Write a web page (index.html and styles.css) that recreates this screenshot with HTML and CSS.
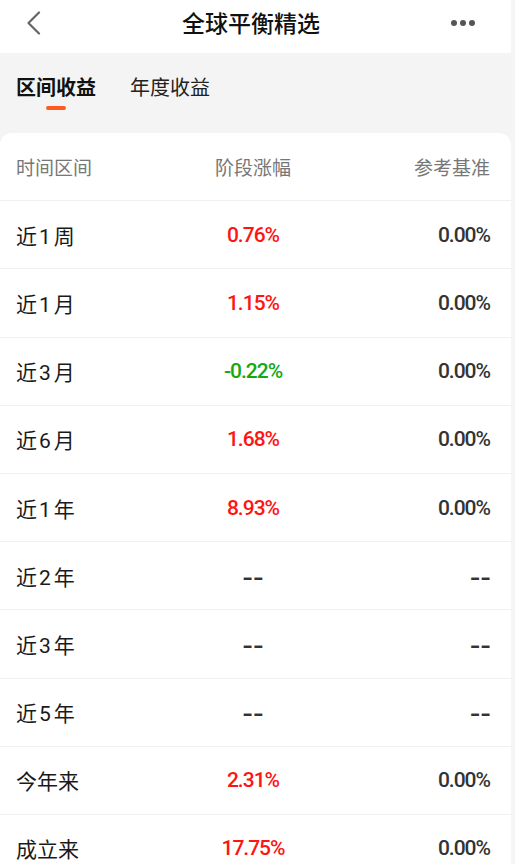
FILE: index.html
```html
<!DOCTYPE html>
<html lang="zh-CN">
<head>
<meta charset="utf-8">
<title>全球平衡精选</title>
<link rel="stylesheet" href="styles.css">
</head>
<body>
<div class="page">
  <header class="topbar">
    <span class="back">
      <svg width="16" height="24" viewBox="0 0 16 24"><path d="M13 1.5 L2.5 12 L13 22.5" fill="none" stroke="#666" stroke-width="2.2" stroke-linecap="round" stroke-linejoin="round"/></svg>
    </span>
    <h1 class="title">全球平衡精选</h1>
    <span class="more"><i></i><i></i><i></i></span>
  </header>
  <nav class="tabs">
    <span class="tab active">区间收益</span>
    <span class="tab">年度收益</span>
  </nav>
  <section class="card">
    <div class="row head"><span>时间区间</span><span>阶段涨幅</span><span>参考基准</span></div>
    <div class="row"><span>近<b class="d">1</b>周</span><span class="up">0.76%</span><span class="num">0.00%</span></div>
    <div class="row"><span>近<b class="d">1</b>月</span><span class="up">1.15%</span><span class="num">0.00%</span></div>
    <div class="row"><span>近<b class="d">3</b>月</span><span class="down">-0.22%</span><span class="num">0.00%</span></div>
    <div class="row"><span>近<b class="d">6</b>月</span><span class="up">1.68%</span><span class="num">0.00%</span></div>
    <div class="row"><span>近<b class="d">1</b>年</span><span class="up">8.93%</span><span class="num">0.00%</span></div>
    <div class="row"><span>近<b class="d">2</b>年</span><span class="nil">--</span><span class="nil">--</span></div>
    <div class="row"><span>近<b class="d">3</b>年</span><span class="nil">--</span><span class="nil">--</span></div>
    <div class="row"><span>近<b class="d">5</b>年</span><span class="nil">--</span><span class="nil">--</span></div>
    <div class="row"><span>今年来</span><span class="up">2.31%</span><span class="num">0.00%</span></div>
    <div class="row"><span>成立来</span><span class="up">17.75%</span><span class="num">0.00%</span></div>
  </section>
</div>
</body>
</html>
```
FILE: styles.css
```css
html, body {
  margin: 0;
  padding: 0;
  height: 864px;
  overflow: hidden;
  background: #f5f5f5;
  font-family: "Noto Sans CJK SC", "Noto Sans", sans-serif;
}
.page {
  width: 511px;
  background: #f4f4f4;
  min-height: 864px;
}
.topbar {
  height: 53px;
  background: #fff;
  display: flex;
  align-items: center;
  justify-content: space-between;
  padding: 0 36px 8px 26px;
  box-sizing: border-box;
}
.back { display: flex; width: 16px; }
.title {
  margin: 0 0 0 9px;
  font-size: 23px;
  font-weight: 500;
  color: #111;
  line-height: 1;
}
.more { display: flex; gap: 3px; }
.more i {
  display: block;
  width: 6px;
  height: 6px;
  border-radius: 50%;
  background: #555;
}
.tabs {
  height: 80px;
  display: flex;
  gap: 34px;
  padding: 0 16px;
  align-items: flex-start;
}
.tab {
  font-size: 20px;
  color: #222;
  line-height: 1;
  margin-top: 24px;
  position: relative;
}
.tab.active { font-weight: 700; color: #111; }
.tab.active::after {
  content: "";
  position: absolute;
  left: 30px;
  top: 29px;
  width: 20px;
  height: 4px;
  border-radius: 2px;
  background: #ff5a1f;
}
.card {
  background: #fff;
  border-radius: 12px 12px 0 0;
}
.row {
  display: grid;
  grid-template-columns: 1fr 1fr 1fr;
  align-items: center;
  height: 67.2px;
  border-bottom: 1px solid #f0f0f0;
  padding: 0 21px 0 16px;
  font-size: 21px;
  color: #1a1a1a;
}
.row.head { color: #777; font-size: 19px; }
.row span:nth-child(2) { text-align: center; }
.row span:nth-child(3) { text-align: right; }
.d {
  font-weight: 400;
  font-family: Roboto, "Noto Sans", sans-serif;
  padding: 0 3px 0 2px;
}
.num, .up, .down {
  font-family: Roboto, "Noto Sans", sans-serif;
  font-size: 21px;
  font-weight: 500;
  letter-spacing: -1px;
}
.num { color: #333; }
.up { color: #ff1414; }
.down { color: #14a814; }
.nil {
  font-family: "Liberation Sans", Arial, sans-serif;
  font-size: 32px;
  line-height: 1;
  color: #333;
}
.row span.nil:nth-child(3) { margin-right: -1px; }
```
